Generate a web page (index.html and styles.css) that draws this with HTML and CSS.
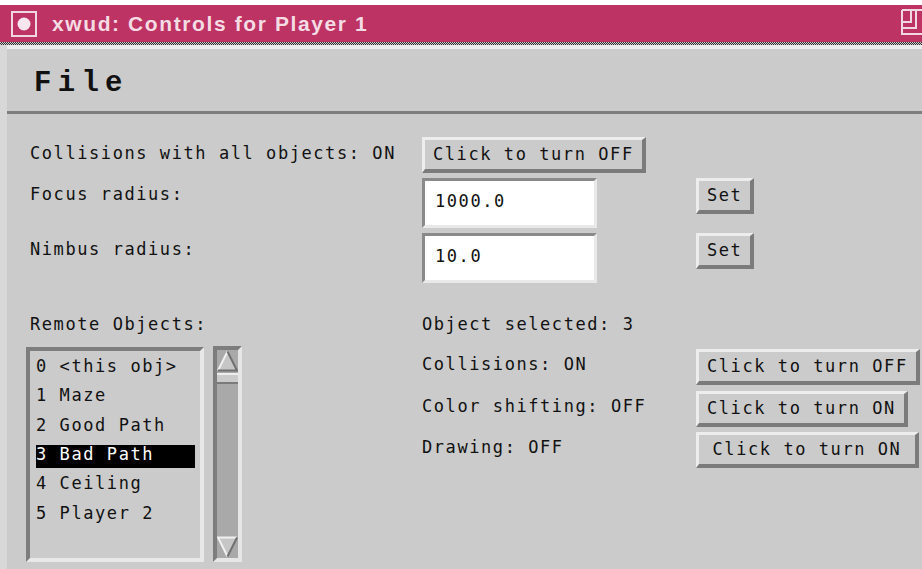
FILE: index.html
```html
<!DOCTYPE html>
<html lang="en">
<head>
<meta charset="utf-8">
<title>xwud: Controls for Player 1</title>
<link rel="stylesheet" href="styles.css">
</head>
<body>
<div class="window">
  <header class="titlebar">
    <svg class="wm-menu" width="26" height="26" viewBox="0 0 26 26" aria-hidden="true">
      <rect x="1" y="1" width="24" height="24" fill="none" stroke="#f2d6e0" stroke-width="2"/>
      <circle cx="13" cy="13" r="6.5" fill="#f7e7ed"/>
    </svg>
    <h1 class="title">xwud: Controls for Player 1</h1>
    <svg class="wm-max" width="21" height="26" viewBox="0 0 21 26" aria-hidden="true">
      <path d="M1 1 H22 M1 1 V25 H22 M10 1 V13 H1 M15 1 V19 H1" fill="none" stroke="#f2d6e0" stroke-width="2"/>
    </svg>
  </header>
  <div class="title-edge"></div>
  <div class="frame">
    <nav class="menubar"><span class="menu">File</span></nav>
    <main class="content">
      <section class="settings">
        <span class="label">Collisions with all objects: ON</span>
        <button class="btn" type="button">Click to turn OFF</button>
        <span></span>

        <span class="label">Focus radius:</span>
        <input class="field" type="text" value="1000.0">
        <button class="btn" type="button">Set</button>

        <span class="label">Nimbus radius:</span>
        <input class="field" type="text" value="10.0">
        <button class="btn" type="button">Set</button>
      </section>

      <section class="objects">
        <div class="remote">
          <span class="heading">Remote Objects:</span>
          <div class="list-row">
            <ul class="listbox">
              <li>0 &lt;this obj&gt;</li>
              <li>1 Maze</li>
              <li>2 Good Path</li>
              <li class="chosen">3 Bad Path</li>
              <li>4 Ceiling</li>
              <li>5 Player 2</li>
            </ul>
            <div class="scrollbar">
              <svg class="scroll-arrow" width="21" height="22" viewBox="0 0 21 22" aria-hidden="true">
                <polygon points="10.5,1.5 1,20.5 20,20.5" fill="#c6c6c6"/>
                <polyline points="1,20.5 10.5,1.5" fill="none" stroke="#f0f0f0" stroke-width="2"/>
                <polyline points="10.5,1.5 20,20.5 1,20.5" fill="none" stroke="#707070" stroke-width="2"/>
              </svg>
              <div class="thumb"></div>
              <div class="track"></div>
              <svg class="scroll-arrow" width="21" height="22" viewBox="0 0 21 22" aria-hidden="true">
                <polygon points="1,1.5 20,1.5 10.5,20.5" fill="#c6c6c6"/>
                <polyline points="10.5,20.5 1,1.5 20,1.5" fill="none" stroke="#f0f0f0" stroke-width="2"/>
                <polyline points="20,1.5 10.5,20.5" fill="none" stroke="#707070" stroke-width="2"/>
              </svg>
            </div>
          </div>
        </div>

        <div class="selected">
          <span class="heading">Object selected: 3</span>
          <div class="toggles">
            <span class="label">Collisions: ON</span>
            <button class="btn" type="button">Click to turn OFF</button>
            <span class="label">Color shifting: OFF</span>
            <button class="btn" type="button">Click to turn ON</button>
            <span class="label">Drawing: OFF</span>
            <button class="btn btn-wide" type="button">Click to turn ON</button>
          </div>
        </div>
      </section>
    </main>
  </div>
</div>
</body>
</html>
```

FILE: styles.css
```css
* { box-sizing: border-box; }

html, body {
  margin: 0;
  height: 100%;
}

body {
  background: #cbcbcb;
  overflow: hidden;
  color: #111;
  font-family: "DejaVu Sans Mono", monospace;
  font-size: 17px;
  line-height: 20px;
  letter-spacing: 1.57px;
}

.window {
  height: 100%;
  display: flex;
  flex-direction: column;
  border-top: 5px solid #fff;
}

/* window manager title bar */
.titlebar {
  flex: none;
  height: 37px;
  display: flex;
  align-items: center;
  padding-left: 11px;
  background: #bd3363;
  color: #f4dbe4;
  overflow: hidden;
}

.wm-menu { flex: none; }

.title {
  margin: 0 0 0 15px;
  font: bold 21px/24px "Liberation Sans", Arial, sans-serif;
  letter-spacing: 1.6px;
  white-space: nowrap;
}

.wm-max {
  flex: none;
  margin-left: auto;
  align-self: flex-start;
  margin-top: 4px;
}

.title-edge {
  flex: none;
  height: 3px;
  background: repeating-conic-gradient(#333 0 25%, #c8c8c8 0 50%) 0 0 / 2px 2px;
}

.frame {
  flex: 1;
  display: flex;
  flex-direction: column;
  border-left: 7px solid #d8d8d8;
}

/* menu bar */
.menubar {
  flex: none;
  height: 69px;
  border-top: 4px solid #ececec;
  border-bottom: 3px solid #7f7f7f;
  padding: 18px 0 0 27px;
}

.menu {
  font: bold 29px/33px "Liberation Mono", monospace;
  letter-spacing: 6.3px;
}

/* form body */
.content {
  flex: 1;
  padding: 23px 0 0 23px;
}

.settings {
  display: grid;
  grid-template-columns: 392px 274px auto;
  row-gap: 5px;
  align-items: start;
  justify-items: start;
}

.label {
  padding-top: 6px;
  white-space: nowrap;
}

.btn {
  margin: 0;
  padding: 4px 8px 5px;
  font: inherit;
  line-height: 20px;
  letter-spacing: inherit;
  color: inherit;
  background: #cbcbcb;
  border-style: solid;
  border-width: 3px 4px 4px 3px;
  border-color: #ededed #7b7b7b #7b7b7b #ededed;
  white-space: nowrap;
  text-align: center;
}

.btn-wide { width: 223px; }

.field {
  margin: 0;
  width: 175px;
  height: 50px;
  padding: 10px 10px 14px;
  font: inherit;
  line-height: 20px;
  letter-spacing: inherit;
  color: inherit;
  background: #fff;
  border-style: solid;
  border-width: 3px;
  border-color: #8a8a8a #e9e9e9 #e9e9e9 #8a8a8a;
  outline: none;
}

.objects {
  display: grid;
  grid-template-columns: 392px auto;
  margin-top: 31px;
}

.heading {
  display: block;
  white-space: nowrap;
}

.list-row {
  display: flex;
  gap: 9px;
  margin: 13px 0 0 -4px;
}

.listbox {
  list-style: none;
  margin: 0;
  width: 178px;
  height: 215px;
  padding: 6px 5px 0 6px;
  display: flex;
  flex-direction: column;
  gap: 6.33px;
  border: 4px solid;
  border-color: #7d7d7d #e8e8e8 #e8e8e8 #7d7d7d;
}

.listbox li {
  flex: none;
  height: 23px;
  line-height: 18px;
  white-space: nowrap;
}

.listbox .chosen {
  background: #000;
  color: #fff;
}

.scrollbar {
  width: 29px;
  height: 216px;
  margin-top: -1px;
  display: flex;
  flex-direction: column;
  background: #a9a9a9;
  border: 4px solid;
  border-color: #7d7d7d #e6e6e6 #e6e6e6 #7d7d7d;
}

.scroll-arrow {
  display: block;
  flex: none;
}

.thumb {
  flex: none;
  height: 11px;
  margin-top: 1px;
  background: #cbcbcb;
  border-top: 2px solid #eeeeee;
  border-bottom: 2px solid #7b7b7b;
}

.track { flex: 1; }

.toggles {
  display: grid;
  grid-template-columns: 274px auto;
  row-gap: 5.5px;
  margin-top: 15px;
  align-items: start;
  justify-items: start;
}

.toggles .label { padding-top: 5px; }
```
